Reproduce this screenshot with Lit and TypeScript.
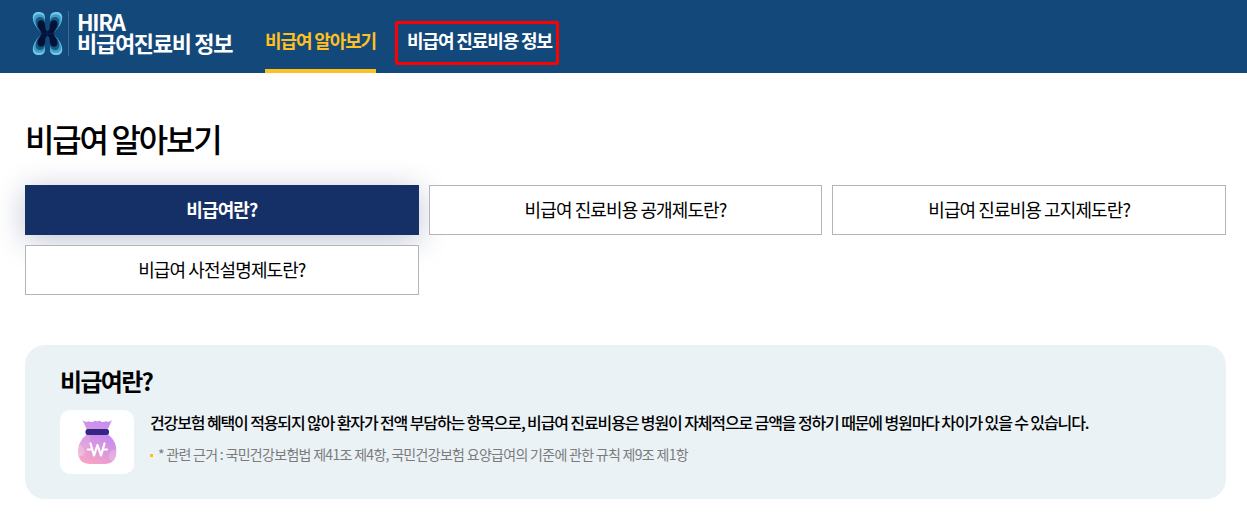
import { LitElement, css, html, svg } from 'lit';
import { customElement, property } from 'lit/decorators.js';
import { classMap } from 'lit/directives/class-map.js';

interface NavItem {
  label: string;
  active?: boolean;
  marked?: boolean;
}

const NAV: NavItem[] = [
  { label: '비급여 알아보기', active: true },
  { label: '비급여 진료비용 정보', marked: true },
];

const TABS = [
  '비급여란?',
  '비급여 진료비용 공개제도란?',
  '비급여 진료비용 고지제도란?',
  '비급여 사전설명제도란?',
];

// One wing of the emblem (top left); the other three are mirrored copies.
const wing = svg`
  <path fill="#72c9ec" d="M8 20C4.500 17 1 12 .8 6.500.7 3 3 1 6.500 1c4.500 0 6.500 2 6.500 6v10z" />
  <path fill="#3f9fc8" d="M8 20.500C5 17 2 13 1.800 8.500 1.700 5 4 3.200 7 3.200c4 0 6 2 6 6V18z" />
  <path fill="#155b82" d="M8.500 21C6 18 3.700 14.500 3.600 11c-.1-3.500 1.700-5 4.200-5 3.400 0 5.200 2.200 5.200 6v6z" />
  <path fill="#04123a" d="M15.500 22.500H9.500C9 19 5.500 17.500 5.500 13.500c0-3 1.300-4.200 3.500-4.200 3 0 4.200 2.700 4.200 6.200 0 2.500.8 4 2.300 4.500z" />
`;

/**
 * Site header: emblem, site name and main navigation.
 *
 * @element hira-header
 */
@customElement('hira-header')
export class HiraHeader extends LitElement {
  @property({ attribute: false }) items: NavItem[] = [];

  static styles = css`
    :host {
      display: flex;
      height: 73px;
      box-sizing: border-box;
      padding-left: 32px;
      background: #13487b;
      color: #fff;
    }
    .logo {
      display: flex;
      align-items: flex-start;
      width: 233px;
      box-sizing: border-box;
      padding-top: 11px;
    }
    .emblem {
      display: block;
      width: 31px;
      height: 45px;
    }
    .name {
      height: 45px;
      box-sizing: border-box;
      margin-left: 5px;
      padding-left: 8px;
      border-left: 1px solid #42698f;
      font-size: 22px;
      font-weight: 700;
      line-height: 21px;
      letter-spacing: -1.3px;
      white-space: nowrap;
    }
    .name span {
      display: block;
    }
    nav {
      display: flex;
      gap: 19px;
    }
    .item {
      box-sizing: border-box;
      height: 73px;
      border-bottom: 4px solid transparent;
      font-size: 18px;
      font-weight: 700;
      line-height: 81px;
      letter-spacing: -1.12px;
      white-space: nowrap;
    }
    .item.active {
      color: #ffc020;
      border-bottom-color: #ffc020;
    }
    .item.marked {
      height: 44px;
      margin-top: 21px;
      padding: 0 4px 0 9px;
      border: 3px solid #f00;
      border-radius: 2px;
      line-height: 33px;
    }
  `;

  render() {
    return html`
      <div class="logo">
        <svg class="emblem" viewBox="0 0 31 45">
          <g>${wing}</g>
          <g transform="matrix(-1 0 0 1 31 0)">${wing}</g>
          <g transform="matrix(1 0 0 -1 0 45)">${wing}</g>
          <g transform="matrix(-1 0 0 -1 31 45)">${wing}</g>
        </svg>
        <div class="name"><span>HIRA</span><span>비급여진료비 정보</span></div>
      </div>
      <nav>
        ${this.items.map(
          (item) => html`<div
            class=${classMap({ item: true, active: !!item.active, marked: !!item.marked })}
          >${item.label}</div>`,
        )}
      </nav>
    `;
  }
}

/**
 * Rounded panel with a heading, a picture and slotted text.
 *
 * @element hira-info
 * @slot - Main sentence.
 * @slot note - Small print under it.
 */
@customElement('hira-info')
export class HiraInfo extends LitElement {
  @property() heading = '';

  static styles = css`
    :host {
      display: block;
      box-sizing: border-box;
      height: 154px;
      padding: 19px 35px 0;
      border-radius: 20px;
      background: #eaf2f6;
    }
    h3 {
      margin: 0;
      font-size: 24px;
      font-weight: 700;
      line-height: 34px;
      letter-spacing: -0.07em;
    }
    .row {
      display: flex;
      gap: 16px;
      margin-top: 12px;
    }
    .pic {
      display: flex;
      flex: none;
      align-items: center;
      justify-content: center;
      width: 74px;
      height: 64px;
      border-radius: 10px;
      background: #fff;
    }
    .lead {
      font-size: 16px;
      font-weight: 500;
      line-height: 24px;
      letter-spacing: -1.12px;
      white-space: nowrap;
    }
    .note {
      display: flex;
      align-items: center;
      gap: 5px;
      margin-top: 9px;
      color: #7b7b7b;
      font-size: 14px;
      line-height: 22px;
      letter-spacing: -0.05em;
      white-space: nowrap;
    }
    .note::before {
      content: '';
      width: 3px;
      height: 3px;
      margin-top: 2px;
      background: #ffbc1c;
    }
  `;

  render() {
    return html`
      <h3>${this.heading}</h3>
      <div class="row">
        <div class="pic">
          <svg width="40" height="46" viewBox="-.5 0 40 46">
            <defs>
              <linearGradient id="bag" x1=".7" y1="0" x2=".2" y2="1">
                <stop offset="0" stop-color="#c28af2" />
                <stop offset="1" stop-color="#fba6c2" />
              </linearGradient>
              <linearGradient id="neck" x1="1" y1="0" x2="0" y2="1">
                <stop offset="0" stop-color="#c488f6" />
                <stop offset="1" stop-color="#d699e0" />
              </linearGradient>
              <clipPath id="body">
                <path d="M10.500 15h19c5 3 9.500 9 9.500 17 0 9-5 13-12 13H13C5 45 .5 41 .5 32 .5 24 5.500 18 10.500 15z" />
              </clipPath>
            </defs>
            <path fill="url(#neck)" d="M5 1c2 1.800 4 2.400 6 1.200 2 1.200 4.500 1.200 6.500-.8 1.500 1.200 3 1.200 4.500 0 2 2 4.500 2 6.500.8 2 1.200 4 .6 6-1.200L30 11H9.500z" />
            <g clip-path="url(#body)">
              <rect y="14" width="40" height="32" fill="url(#bag)" />
              <path fill="#fff" opacity=".12" d="M0 14h12c2 8 0 16-5 23H0z" />
              <circle cx="0" cy="32" r="6.500" fill="#fff" opacity=".2" />
              <circle cx="38" cy="37" r="6.500" fill="#fff" opacity=".22" />
            </g>
            <rect x="8" y="10" width="23.500" height="6" rx="2.500" fill="#342783" />
            <path
              fill="none"
              stroke="#fff"
              stroke-width="2.200"
              stroke-linecap="round"
              stroke-linejoin="round"
              d="M13 24.500l3.500 12L20 26l3.500 10.500 3.500-12M10.500 30.500h4M25.500 30.500h4"
            />
          </svg>
        </div>
        <div>
          <div class="lead"><slot></slot></div>
          <div class="note"><slot name="note"></slot></div>
        </div>
      </div>
    `;
  }
}

@customElement('app-root')
export class AppRoot extends LitElement {
  static styles = css`
    :host {
      display: block;
      height: 520px;
      overflow: hidden;
      background: #fff;
      color: #000;
      font-family: 'Noto Sans CJK KR', 'Noto Sans', sans-serif;
    }
    main {
      padding: 41px 21px 0 25px;
    }
    h2 {
      margin: 0 0 23px;
      font-size: 32px;
      font-weight: 500;
      line-height: 48px;
      letter-spacing: -0.07em;
    }
    .tabs {
      display: grid;
      grid-template-columns: repeat(3, 1fr);
      grid-auto-rows: 50px;
      gap: 10px;
      margin-bottom: 50px;
    }
    .tab {
      box-sizing: border-box;
      border: 1px solid #b3b4b7;
      background: #fff;
      font-size: 18px;
      font-weight: 400;
      line-height: 46px;
      letter-spacing: -0.05em;
      text-align: center;
    }
    .tab.active {
      border-color: #143066;
      background: #143066;
      box-shadow: 0 5px 30px rgba(20, 40, 100, 0.28);
      color: #fff;
      font-weight: 700;
    }
  `;

  render() {
    return html`
      <hira-header .items=${NAV}></hira-header>
      <main>
        <h2>비급여 알아보기</h2>
        <div class="tabs">
          ${TABS.map(
            (label, i) => html`<div class=${classMap({ tab: true, active: i === 0 })}>${label}</div>`,
          )}
        </div>
        <hira-info heading="비급여란?">
          건강보험 혜택이 적용되지 않아 환자가 전액 부담하는 항목으로, 비급여 진료비용은 병원이 자체적으로 금액을 정하기 때문에 병원마다 차이가 있을 수 있습니다.
          <span slot="note">* 관련 근거 : 국민건강보험법 제41조 제4항, 국민건강보험 요양급여의 기준에 관한 규칙 제9조 제1항</span>
        </hira-info>
      </main>
    `;
  }
}

declare global {
  interface HTMLElementTagNameMap {
    'app-root': AppRoot;
    'hira-header': HiraHeader;
    'hira-info': HiraInfo;
  }
}
